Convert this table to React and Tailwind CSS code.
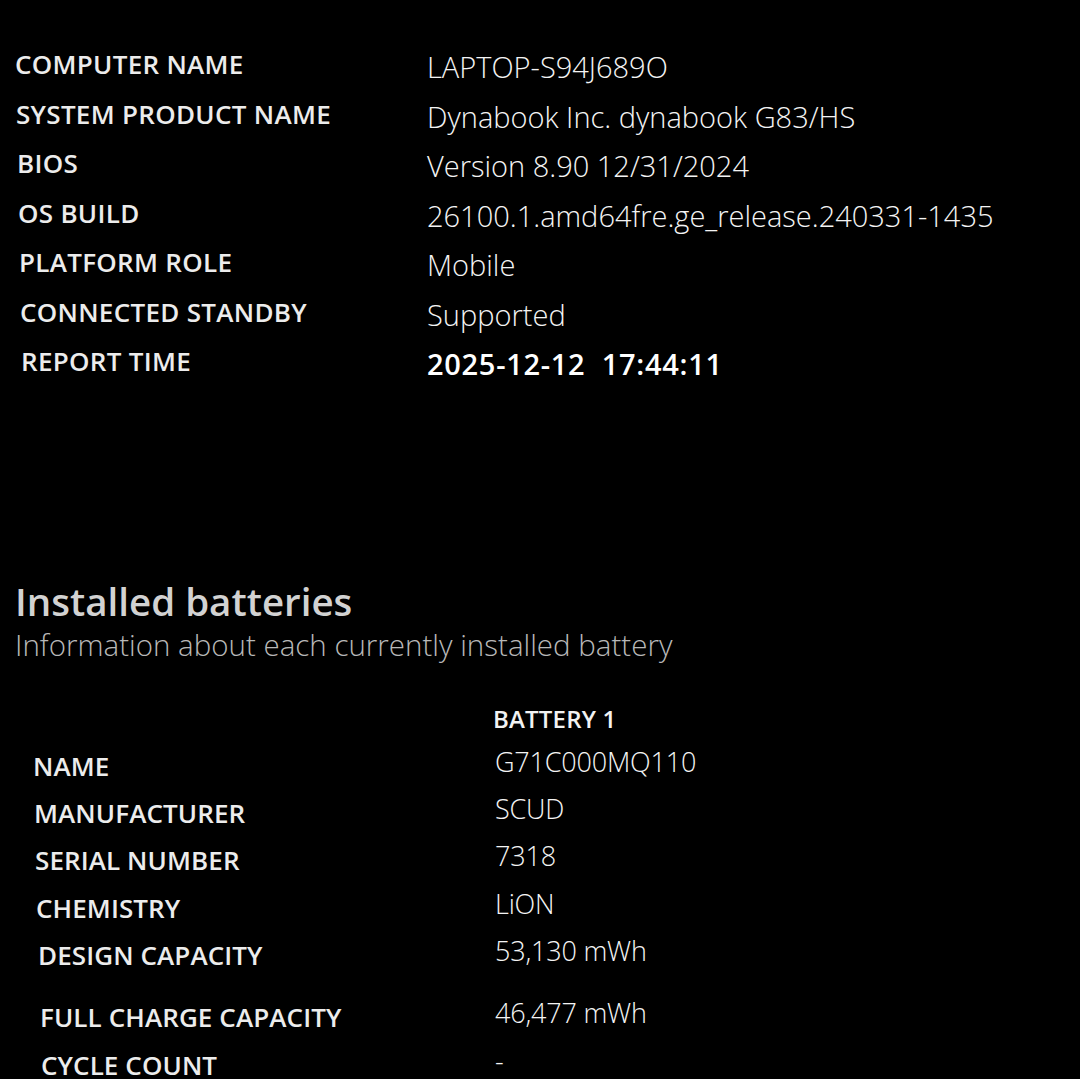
import React from "react";

const top = [
  ["COMPUTER NAME", "LAPTOP-S94J689O", "pl-[15px]", false],
  ["SYSTEM PRODUCT NAME", "Dynabook Inc. dynabook G83/HS", "pl-[16px]", false],
  ["BIOS", "Version 8.90 12/31/2024", "pl-[17px]", false],
  ["OS BUILD", "26100.1.amd64fre.ge_release.240331-1435", "pl-[18px]", false],
  ["PLATFORM ROLE", "Mobile", "pl-[19px]", false],
  ["CONNECTED STANDBY", "Supported", "pl-[20px]", false],
  ["REPORT TIME", "2025-12-12\u00a0\u00a017:44:11", "pl-[21px]", true],
];

const batt = [
  ["NAME", "G71C000MQ110", "pl-[33px]", "h-[47px]"],
  ["MANUFACTURER", "SCUD", "pl-[34px]", "h-[47px]"],
  ["SERIAL NUMBER", "7318", "pl-[35px]", "h-[48px]"],
  ["CHEMISTRY", "LiON", "pl-[36px]", "h-[47px]"],
  ["DESIGN CAPACITY", "53,130 mWh", "pl-[38px]", "h-[62px]"],
  ["FULL CHARGE CAPACITY", "46,477 mWh", "pl-[40px]", "h-[48px]"],
  ["CYCLE COUNT", "-", "pl-[41px]", "h-[48px]"],
];

export default function App() {
  return (
    <div
      className="w-[1080px] h-[1079px] bg-black overflow-hidden text-[#f2f2f2]"
      style={{ fontFamily: '"Open Sans", "Noto Sans", sans-serif' }}
    >
      <div className="pt-[40px] flex flex-col">
        {top.map(([l, v, pl, bold]) => (
          <div key={l} className="flex items-center h-[49.5px]">
            <div className={`${pl} w-[427px] shrink-0 text-[26px] font-semibold tracking-[0.3px] text-[#ececec]`}>
              {l}
            </div>
            <div
              className={`text-[29px] ${bold ? "font-semibold text-white tracking-[0.7px]" : "font-light text-[#f4f4f4] tracking-[0px]"} pt-[4px]`}
            >
              {v}
            </div>
          </div>
        ))}
      </div>

      <div className="pt-[191px] pl-[15px]">
        <div className="text-[38.5px] font-semibold text-[#d2d2d2] leading-[46px]">
          Installed batteries
        </div>
        <div className="text-[29.5px] font-light text-[#b8b8b8] leading-[42px]">
          Information about each currently installed battery
        </div>
      </div>

      <div className="pt-[39px]">
        <div className="flex h-[28px] items-center mb-[9px]">
          <div className="w-[493px] shrink-0" />
          <div className="text-[24px] font-semibold text-[#f2f2f2] tracking-[0.2px]">BATTERY 1</div>
        </div>
        {batt.map(([l, v, pl, h]) => (
          <div key={l} className={`flex ${h}`}>
            <div className={`${pl} w-[495px] shrink-0 text-[26px] font-semibold text-[#ececec] pt-[5px] tracking-[0.1px]`}>
              {l}
            </div>
            <div className="text-[27px] font-light text-[#f4f4f4] tracking-[-0.2px]">{v}</div>
          </div>
        ))}
      </div>
    </div>
  );
}
